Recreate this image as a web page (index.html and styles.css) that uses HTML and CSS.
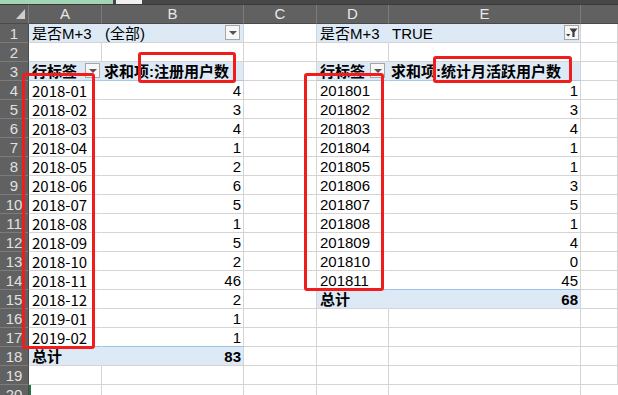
FILE: index.html
```html
<!DOCTYPE html>
<html lang="zh-CN">
<head>
<meta charset="utf-8">
<title>数据透视表</title>
<link rel="stylesheet" href="styles.css">
</head>
<body>
<div class="page">
  <div class="topbar"><span class="tab tab-green"></span><span class="tab tab-white"></span></div>
  <div class="sheet">
    <div class="ch corner"><span class="tri"></span></div><div class="ch">A</div><div class="ch">B</div><div class="ch">C</div><div class="ch">D</div><div class="ch">E</div><div class="ch last"></div>

    <div class="rh">1</div><div class="c pv nv">是否M+3</div><div class="c pv btn-cell">(全部)<span class="dd"><span class="arr"></span></span></div><div class="c"></div><div class="c pv nv">是否M+3</div><div class="c pv btn-cell tru">TRUE<span class="dd flt"><svg width="13" height="13" viewBox="0 0 13 13"><path d="M4.5 2.5h8L9.6 6.2v4.8H7.4V6.2z" fill="#3c3c3c"/><path d="M1 8h4.4L3.2 10.6z" fill="#3c3c3c"/></svg></span></div><div class="c"></div>

    <div class="rh">2</div><div class="c"></div><div class="c"></div><div class="c"></div><div class="c"></div><div class="c"></div><div class="c"></div>

    <div class="rh">3</div><div class="c pv nv b hb btn-cell">行标签<span class="dd dd-a"><span class="arr"></span></span></div><div class="c pv b hb hd">求和项:注册用户数</div><div class="c"></div><div class="c pv nv b hb btn-cell">行标签<span class="dd dd-d"><span class="arr"></span></span></div><div class="c pv b hb hd">求和项:统计月活跃用户数</div><div class="c"></div>

    <div class="rh">4</div><div class="c nv dt">2018-01</div><div class="c r">4</div><div class="c"></div><div class="c nv">201801</div><div class="c r">1</div><div class="c"></div>
    <div class="rh">5</div><div class="c nv dt">2018-02</div><div class="c r">3</div><div class="c"></div><div class="c nv">201802</div><div class="c r">3</div><div class="c"></div>
    <div class="rh">6</div><div class="c nv dt">2018-03</div><div class="c r">4</div><div class="c"></div><div class="c nv">201803</div><div class="c r">4</div><div class="c"></div>
    <div class="rh">7</div><div class="c nv dt">2018-04</div><div class="c r">1</div><div class="c"></div><div class="c nv">201804</div><div class="c r">1</div><div class="c"></div>
    <div class="rh">8</div><div class="c nv dt">2018-05</div><div class="c r">2</div><div class="c"></div><div class="c nv">201805</div><div class="c r">1</div><div class="c"></div>
    <div class="rh">9</div><div class="c nv dt">2018-06</div><div class="c r">6</div><div class="c"></div><div class="c nv">201806</div><div class="c r">3</div><div class="c"></div>
    <div class="rh">10</div><div class="c nv dt">2018-07</div><div class="c r">5</div><div class="c"></div><div class="c nv">201807</div><div class="c r">5</div><div class="c"></div>
    <div class="rh">11</div><div class="c nv dt">2018-08</div><div class="c r">1</div><div class="c"></div><div class="c nv">201808</div><div class="c r">1</div><div class="c"></div>
    <div class="rh">12</div><div class="c nv dt">2018-09</div><div class="c r">5</div><div class="c"></div><div class="c nv">201809</div><div class="c r">4</div><div class="c"></div>
    <div class="rh">13</div><div class="c nv dt">2018-10</div><div class="c r">2</div><div class="c"></div><div class="c nv">201810</div><div class="c r">0</div><div class="c"></div>
    <div class="rh">14</div><div class="c nv dt">2018-11</div><div class="c r">46</div><div class="c"></div><div class="c nv tb">201811</div><div class="c r tb">45</div><div class="c"></div>
    <div class="rh">15</div><div class="c nv dt">2018-12</div><div class="c r">2</div><div class="c"></div><div class="c pv nv b">总计</div><div class="c pv r b">68</div><div class="c"></div>
    <div class="rh">16</div><div class="c nv dt">2019-01</div><div class="c r">1</div><div class="c"></div><div class="c"></div><div class="c"></div><div class="c"></div>
    <div class="rh">17</div><div class="c nv dt tb">2019-02</div><div class="c r tb">1</div><div class="c"></div><div class="c"></div><div class="c"></div><div class="c"></div>
    <div class="rh">18</div><div class="c pv nv b">总计</div><div class="c pv r b">83</div><div class="c"></div><div class="c"></div><div class="c"></div><div class="c"></div>
    <div class="rh">19</div><div class="c"></div><div class="c"></div><div class="c"></div><div class="c"></div><div class="c"></div><div class="c"></div>
    <div class="rh">20</div><div class="c sel"></div><div class="c"></div><div class="c"></div><div class="c"></div><div class="c"></div><div class="c"></div>
  </div>
  <div class="mark mark-b3"></div>
  <div class="mark mark-a"></div>
  <div class="mark mark-e3"></div>
  <div class="mark mark-d"></div>
</div>
</body>
</html>
```

FILE: styles.css
```css
html, body {
  margin: 0;
  padding: 0;
  background: #ffffff;
  overflow: hidden;
}
.page {
  position: relative;
  width: 618px;
  height: 395px;
  overflow: hidden;
  font-family: "Liberation Sans", "Noto Sans CJK SC", sans-serif;
  font-size: 15px;
  color: #000;
}
.topbar {
  display: flex;
  gap: 3px;
  height: 5px;
  background: #474747;
  border-bottom: 1px solid #3a3a3a;
  box-sizing: border-box;
}
.tab { height: 4px; display: block; }
.tab-green { width: 113px; background: #a2d5b3; }
.tab-white { width: 26px; background: #f0f0f0; }

.sheet {
  display: grid;
  grid-template-columns: 29px 73px 142px 73px 72px 192px 1fr;
  grid-template-rows: 19px;
  grid-auto-rows: 19px;
}
.ch {
  background: #616161;
  color: #e8e8e8;
  border-right: 1px solid #7c7c7c;
  border-bottom: 1px solid #4a4a4a;
  box-sizing: border-box;
  text-align: center;
  line-height: 18px;
  font-size: 15px;
}
.ch.last { border-right: none; }
.corner { position: relative; }
.tri {
  position: absolute;
  right: 3px;
  bottom: 4px;
  width: 0;
  height: 0;
  border-left: 9px solid transparent;
  border-bottom: 10px solid #cfcfcf;
}
.rh {
  background: #616161;
  color: #e0e0e0;
  border-right: 1px solid #4a4a4a;
  border-bottom: 1px solid #7c7c7c;
  box-sizing: border-box;
  text-align: center;
  line-height: 19px;
  font-size: 15px;
}
.c {
  border-right: 1px solid #d4d4d4;
  border-bottom: 1px solid #d4d4d4;
  box-sizing: border-box;
  padding: 0 3px;
  line-height: 19px;
  white-space: nowrap;
  overflow: hidden;
  background: #ffffff;
}
.c:last-child { border-right: none; }
.pv { background: #dde9f5; }
.nv { border-right-color: transparent; }
.b { font-weight: bold; }
.r { text-align: right; padding-right: 2px; }
.hb { border-bottom-color: #a8c8e8; }
.tb { border-bottom-color: #9bc2e6; }
.dt { font-family: "Noto Sans CJK SC", sans-serif; letter-spacing: 0; }
.hd { padding-left: 2px; }
.tru { padding-left: 3px; }
.btn-cell { position: relative; }
.dd {
  position: absolute;
  right: 3px;
  top: 1px;
  width: 15px;
  height: 15px;
  box-sizing: border-box;
  border: 1px solid #a6a6a6;
  background: #f7f7f7;
  display: flex;
  align-items: center;
  justify-content: center;
}
.dd-a { right: 1px; }
.dd-d { right: 3px; }
.flt { right: 1px; }
.arr {
  width: 0;
  height: 0;
  border-left: 4px solid transparent;
  border-right: 4px solid transparent;
  border-top: 4px solid #555;
  margin-top: 1px;
}
.sel { box-shadow: inset 2px 0 0 #217346; }

.mark {
  position: absolute;
  border: 3px solid #f11c1c;
  border-radius: 3px;
  box-sizing: border-box;
}
.mark-b3 { left: 138px; top: 52px; width: 98px; height: 31px; }
.mark-a { left: 22px; top: 73px; width: 73px; height: 276px; }
.mark-e3 { left: 433px; top: 56px; width: 139px; height: 27px; }
.mark-d { left: 304px; top: 73px; width: 80px; height: 218px; }
```
